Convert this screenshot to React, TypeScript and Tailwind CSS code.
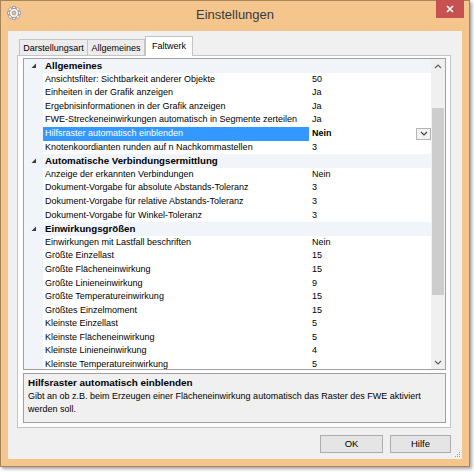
import React from "react";

type Row = { cat?: boolean; name: string; value?: string; sel?: boolean };

const rows: Row[] = [
  { cat: true, name: "Allgemeines" },
  { name: "Ansichtsfilter: Sichtbarkeit anderer Objekte", value: "50" },
  { name: "Einheiten in der Grafik anzeigen", value: "Ja" },
  { name: "Ergebnisinformationen in der Grafik anzeigen", value: "Ja" },
  { name: "FWE-Streckeneinwirkungen automatisch in Segmente zerteilen", value: "Ja" },
  { name: "Hilfsraster automatisch einblenden", value: "Nein", sel: true },
  { name: "Knotenkoordianten runden auf n Nachkommastellen", value: "3" },
  { cat: true, name: "Automatische Verbindungsermittlung" },
  { name: "Anzeige der erkannten Verbindungen", value: "Nein" },
  { name: "Dokument-Vorgabe für absolute Abstands-Toleranz", value: "3" },
  { name: "Dokument-Vorgabe für relative Abstands-Toleranz", value: "3" },
  { name: "Dokument-Vorgabe für Winkel-Toleranz", value: "3" },
  { cat: true, name: "Einwirkungsgrößen" },
  { name: "Einwirkungen mit Lastfall beschriften", value: "Nein" },
  { name: "Größte Einzellast", value: "15" },
  { name: "Größte Flächeneinwirkung", value: "15" },
  { name: "Größte Linieneinwirkung", value: "9" },
  { name: "Größte Temperatureinwirkung", value: "15" },
  { name: "Größtes Einzelmoment", value: "15" },
  { name: "Kleinste Einzellast", value: "5" },
  { name: "Kleinste Flächeneinwirkung", value: "5" },
  { name: "Kleinste Linieneinwirkung", value: "4" },
  { name: "Kleinste Temperatureinwirkung", value: "5" },
];

function Gear() {
  const teeth = [0, 45, 90, 135, 180, 225, 270, 315];
  return (
    <svg width="14" height="14" viewBox="0 0 14 14">
      <g transform="translate(7 7)">
        {teeth.map((a) => (
          <rect
            key={a}
            x={-1.6}
            y={-6.6}
            width={3.2}
            height={3}
            rx={0.6}
            fill="#f4f4f4"
            stroke="#8c8c8c"
            strokeWidth={0.8}
            transform={`rotate(${a})`}
          />
        ))}
        <circle r={4.6} fill="#f4f4f4" stroke="#8c8c8c" strokeWidth={0.8} />
        <circle r={1.9} fill="#f4c68e" stroke="#8c8c8c" strokeWidth={0.8} />
      </g>
    </svg>
  );
}

function Expander() {
  return (
    <svg width="6" height="6" viewBox="0 0 6 6">
      <polygon points="5,0.5 5,5 0.5,5" fill="#3c3c3c" />
    </svg>
  );
}

function ChevronUp() {
  return (
    <svg width="8" height="5" viewBox="0 0 8 5">
      <polyline points="1,4 4,1 7,4" fill="none" stroke="#606060" strokeWidth="1.2" />
    </svg>
  );
}

function ChevronDown({ color = "#606060" }: { color?: string }) {
  return (
    <svg width="8" height="5" viewBox="0 0 8 5">
      <polyline points="1,1 4,4 7,1" fill="none" stroke={color} strokeWidth="1.2" />
    </svg>
  );
}

export default function App() {
  return (
    <div
      className="w-[474px] h-[472px] bg-white relative overflow-hidden"
      style={{ fontFamily: '"Liberation Sans", Arial, sans-serif' }}
    >
      <div className="w-[470px] h-[467px] bg-[#f4c68e] border border-[#a8845a] shadow-[2px_2px_3px_rgba(0,0,0,0.35)] flex flex-col relative">
        {/* title bar */}
        <div className="h-[30px] flex items-center relative shrink-0">
          <div className="ml-[6px] mt-[-6px]">
            <Gear />
          </div>
          <div className="absolute left-0 right-0 top-[6px] text-center text-[13px] leading-[16px] text-[#3a3a3a]">
            Einstellungen
          </div>
          <div className="absolute top-[-1px] right-[5px] w-[28px] h-[18px] bg-[#c75050] flex items-center justify-center">
            <svg width="8" height="8" viewBox="0 0 8 8">
              <path d="M1 1 L7 7 M7 1 L1 7" stroke="white" strokeWidth="1.6" />
            </svg>
          </div>
        </div>

        {/* client */}
        <div className="mx-[7px] mb-[7px] flex-1 bg-[#f0f0f0] flex flex-col text-[9px] text-black">
          {/* tabs */}
          <div className="h-[24px] flex items-end pl-[11px] relative z-10 shrink-0">
            <div className="w-[69px] h-[16px] border border-b-0 border-[#c4c4c4] bg-[#ececec] flex items-center justify-center mb-0 leading-[12px]">
              Darstellungsart
            </div>
            <div className="w-[57px] h-[16px] border border-b-0 border-l-0 border-[#c4c4c4] bg-[#ececec] flex items-center justify-center leading-[12px]">
              Allgemeines
            </div>
            <div className="w-[48px] h-[20px] border border-b-0 border-[#c4c4c4] bg-white flex items-start justify-center pt-[3px] mb-[-1px] leading-[12px]">
              Faltwerk
            </div>
          </div>

          {/* tab page */}
          <div className="ml-[9px] w-[434px] h-[373px] border border-[#c4c4c4] bg-[#fdfdfd] pl-[5px] pt-[2px] flex flex-col">
            {/* property grid */}
            <div className="w-[423px] h-[312px] border border-[#a0a0a0] bg-white flex">
              <div className="flex-1 flex flex-col overflow-hidden">
                {rows.map((r, i) =>
                  r.cat ? (
                    <div key={i} className="h-[13.6px] shrink-0 flex items-center bg-[#f1f4f9]">
                      <div className="w-[19px] flex justify-center items-center pl-[1px]">
                        <Expander />
                      </div>
                      <div className="pl-[2px] font-bold text-[9.7px] leading-[13.6px] whitespace-nowrap">
                        {r.name}
                      </div>
                    </div>
                  ) : (
                    <div key={i} className="h-[13.6px] shrink-0 flex items-center">
                      <div className="w-[19px] h-full bg-[#f1f4f9]" />
                      <div
                        className={
                          r.sel
                            ? "w-[266px] h-full pl-[2px] leading-[13.6px] whitespace-nowrap overflow-hidden bg-[#3399ff] text-white"
                            : "w-[266px] h-full pl-[2px] leading-[13.6px] whitespace-nowrap overflow-hidden"
                        }
                      >
                        {r.name}
                      </div>
                      <div className="flex-1 h-full pl-[3px] flex items-center justify-between">
                        <span className={r.sel ? "font-bold leading-[13.6px]" : "leading-[13.6px]"}>
                          {r.value}
                        </span>
                        {r.sel && (
                          <div className="w-[15px] h-[12px] mr-[0px] border border-[#b4b4b4] bg-[#f2f2f2] flex items-center justify-center">
                            <ChevronDown color="#404040" />
                          </div>
                        )}
                      </div>
                    </div>
                  )
                )}
              </div>
              {/* scrollbar */}
              <div className="w-[14px] h-full bg-[#f0f0f0] flex flex-col items-center">
                <div className="h-[14px] flex items-center justify-center">
                  <ChevronUp />
                </div>
                <div className="flex-1 w-full px-[1px]">
                  <div className="mt-[35px] h-[187px] w-full bg-[#cdcdcd]" />
                </div>
                <div className="h-[14px] flex items-center justify-center">
                  <ChevronDown />
                </div>
              </div>
            </div>

            {/* description */}
            <div className="mt-[3px] w-[423px] h-[50px] border border-[#a0a0a0] bg-[#f0f0f0] pl-[4px] pt-[2px]">
              <div className="font-bold text-[9.9px] leading-[14px]">Hilfsraster automatisch einblenden</div>
              <div className="leading-[13px]">
                Gibt an ob z.B. beim Erzeugen einer Flächeneinwirkung automatisch das Raster des FWE aktiviert
                <br />
                werden soll.
              </div>
            </div>
          </div>

          {/* buttons */}
          <div className="flex justify-end gap-[7px] pr-[11px] mt-[7px] relative flex-1">
            <div className="w-[63px] h-[18px] border border-[#adadad] bg-[#e5e5e5] flex items-center justify-center text-[9.5px]">
              OK
            </div>
            <div className="w-[61px] h-[18px] border border-[#adadad] bg-[#e5e5e5] flex items-center justify-center text-[9.5px]">
              Hilfe
            </div>
            <svg className="absolute right-[1px] bottom-[1px]" width="7" height="7" viewBox="0 0 7 7">
              <rect x="5" y="1" width="1" height="1" fill="#9a9a9a" />
              <rect x="3" y="3" width="1" height="1" fill="#9a9a9a" />
              <rect x="5" y="3" width="1" height="1" fill="#9a9a9a" />
              <rect x="1" y="5" width="1" height="1" fill="#9a9a9a" />
              <rect x="3" y="5" width="1" height="1" fill="#9a9a9a" />
              <rect x="5" y="5" width="1" height="1" fill="#9a9a9a" />
            </svg>
          </div>
        </div>
      </div>
    </div>
  );
}
